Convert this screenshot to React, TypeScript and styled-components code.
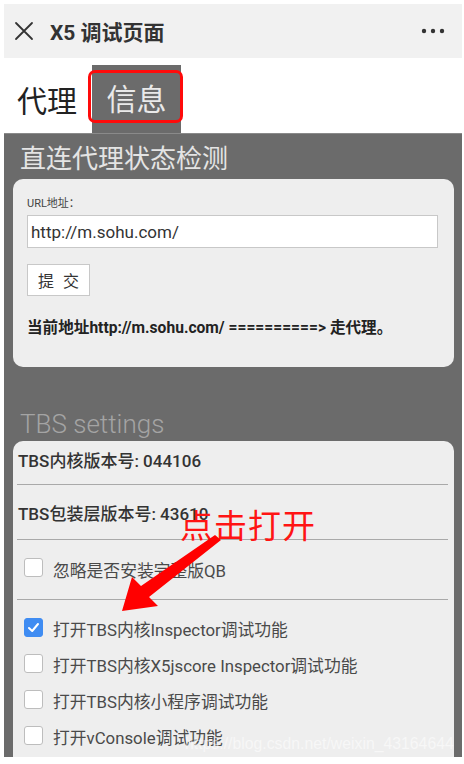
import React from 'react';
import styled, { createGlobalStyle } from 'styled-components';

const GlobalStyle = createGlobalStyle`
  html, body {
    margin: 0;
    padding: 0;
    background: #ffffff;
  }
  body {
    font-family: Roboto, "Noto Sans CJK SC", sans-serif;
    color: #333333;
  }
  * {
    box-sizing: border-box;
  }
`;

const Frame = styled.div`
  position: relative;
  width: 464px;
  height: 764px;
  padding: 4px 2px 7px 4px;
  display: flex;
  flex-direction: column;
  overflow: hidden;
  background: #ffffff;
`;

const Header = styled.header`
  height: 54px;
  flex-shrink: 0;
  display: flex;
  align-items: center;
  padding: 0 17px 0 10px;
  background: #f1f1f1;
`;

const HeaderTitle = styled.h1`
  flex: 1;
  margin: 0 0 0 16px;
  font-size: 21px;
  font-weight: 700;
  color: #333333;
`;

const IconButton = styled.span`
  display: flex;
  align-items: center;
  justify-content: center;
`;

const TabRow = styled.nav`
  height: 75px;
  flex-shrink: 0;
  display: flex;
  align-items: flex-end;
  padding-left: 13px;
`;

const Tab = styled.div<{ $active?: boolean }>`
  position: relative;
  display: flex;
  align-items: center;
  justify-content: center;
  height: 68px;
  padding: ${(p) => (p.$active ? '2px 0 0 0' : '6px 0 0 0')};
  width: ${(p) => (p.$active ? '89px' : 'auto')};
  margin-left: ${(p) => (p.$active ? '15px' : '0')};
  background: ${(p) => (p.$active ? '#6b6b6b' : 'transparent')};
  color: ${(p) => (p.$active ? '#e9e9e9' : '#222222')};
  font-size: 30px;
  line-height: 1;
`;

const Highlight = styled.span`
  position: absolute;
  left: -4px;
  top: 5px;
  width: 95px;
  height: 53px;
  border: 3px solid #ff0a0a;
  border-radius: 7px;
`;

const Panel = styled.main`
  flex: 1;
  display: flex;
  flex-direction: column;
  padding: 0 8px 0 9px;
  background: #6b6b6b;
  border-top: 1px solid #8a8a8a;
`;

const SectionTitle = styled.h2<{ $faded?: boolean }>`
  margin: 0;
  display: flex;
  align-items: ${(p) => (p.$faded ? 'flex-end' : 'center')};
  padding-left: 7px;
  height: ${(p) => (p.$faded ? '74px' : '45px')};
  padding-bottom: ${(p) => (p.$faded ? '2px' : '0')};
  font-size: 26px;
  font-weight: ${(p) => (p.$faded ? 300 : 400)};
  color: ${(p) => (p.$faded ? '#a4a4a4' : '#e4e4e4')};
`;

const Card = styled.section<{ $grow?: boolean }>`
  display: flex;
  flex-direction: column;
  background: #eeeeee;
  border-radius: 10px;
  flex: ${(p) => (p.$grow ? '1' : 'none')};
  border-bottom-left-radius: ${(p) => (p.$grow ? '0' : '10px')};
  border-bottom-right-radius: ${(p) => (p.$grow ? '0' : '10px')};
`;

const ProxyForm = styled.div`
  height: 188px;
  padding: 18px 16px 0 14px;
  display: flex;
  flex-direction: column;
  align-items: flex-start;
`;

const FieldLabel = styled.label`
  font-size: 11px;
  color: #444444;
  line-height: 14px;
`;

const UrlInput = styled.input`
  margin-top: 4px;
  width: 411px;
  height: 33px;
  padding: 0 3px;
  border: 1px solid #c8c8c8;
  background: #ffffff;
  font-family: Roboto, "Noto Sans CJK SC", sans-serif;
  font-size: 17px;
  color: #333333;
  outline: none;
`;

const SubmitButton = styled.button`
  margin-top: 16px;
  width: 63px;
  height: 32px;
  padding: 0;
  display: flex;
  align-items: center;
  justify-content: center;
  gap: 9px;
  white-space: nowrap;
  border: 1px solid #c8c8c8;
  background: #ffffff;
  font-family: "Noto Sans CJK SC", sans-serif;
  font-size: 16px;
  color: #333333;
`;

const StatusText = styled.p`
  margin: 19px 0 0 0;
  font-size: 15.6px;
  font-weight: 700;
  color: #222222;
  white-space: nowrap;
`;

const InfoRow = styled.div<{ $h: number; $pb?: number }>`
  height: ${(p) => p.$h}px;
  display: flex;
  align-items: center;
  padding: 0 0 ${(p) => p.$pb ?? 0}px 5px;
  font-size: 17px;
  font-weight: 500;
  color: #333333;
`;

const Divider = styled.hr`
  margin: 0 6px 0 4px;
  border: none;
  height: 1px;
  background: #a9a9a9;
`;

const OptionList = styled.div`
  padding-top: 11px;
  display: flex;
  flex-direction: column;
`;

const OptionRow = styled.label<{ $h?: number }>`
  height: ${(p) => p.$h ?? 36}px;
  display: flex;
  align-items: center;
  gap: 10px;
  padding-left: 11px;
  font-size: 16.8px;
  font-weight: 400;
  color: #4a4a4a;
`;

const Box = styled.span<{ $checked?: boolean }>`
  width: 19px;
  height: 19px;
  flex-shrink: 0;
  display: flex;
  align-items: center;
  justify-content: center;
  margin-top: -4px;
  border-radius: 3px;
  border: 1px solid ${(p) => (p.$checked ? '#3f8cf2' : '#bdbdbd')};
  background: ${(p) => (p.$checked ? '#3f8cf2' : '#ffffff')};
`;

const Callout = styled.span`
  position: absolute;
  left: 180px;
  top: 500px;
  font-family: "Noto Sans CJK SC", sans-serif;
  font-size: 33px;
  color: #ff1414;
  letter-spacing: 1px;
`;

const ArrowMark = styled.svg`
  position: absolute;
  left: 110px;
  top: 530px;
`;

const Watermark = styled.span`
  position: absolute;
  left: 185px;
  top: 735px;
  font-family: "Liberation Sans", sans-serif;
  font-size: 15.8px;
  color: rgba(255, 255, 255, 0.55);
`;

function Checkbox({ checked }: { checked?: boolean }) {
  return (
    <Box $checked={checked}>
      {checked && (
        <svg width="13" height="13" viewBox="0 0 13 13">
          <path d="M2 7 L5.2 10 L11 3" fill="none" stroke="#ffffff" strokeWidth="2" strokeLinecap="round" strokeLinejoin="round" />
        </svg>
      )}
    </Box>
  );
}

const options = [
  { text: '打开TBS内核Inspector调试功能', checked: true },
  { text: '打开TBS内核X5jscore Inspector调试功能' },
  { text: '打开TBS内核小程序调试功能' },
  { text: '打开vConsole调试功能' },
];

export default function App() {
  return (
    <>
      <GlobalStyle />
      <Frame>
        <Header>
          <IconButton>
            <svg width="20" height="20" viewBox="0 0 20 20">
              <path d="M2 2 L18 18 M18 2 L2 18" stroke="#333" strokeWidth="1.8" strokeLinecap="round" />
            </svg>
          </IconButton>
          <HeaderTitle>X5 调试页面</HeaderTitle>
          <IconButton>
            <svg width="24" height="6" viewBox="0 0 24 6">
              <circle cx="3" cy="3" r="2.2" fill="#333" />
              <circle cx="12" cy="3" r="2.2" fill="#333" />
              <circle cx="21" cy="3" r="2.2" fill="#333" />
            </svg>
          </IconButton>
        </Header>

        <TabRow>
          <Tab>代理</Tab>
          <Tab $active>
            信息
            <Highlight />
          </Tab>
        </TabRow>

        <Panel>
          <SectionTitle>直连代理状态检测</SectionTitle>
          <Card>
            <ProxyForm>
              <FieldLabel>URL地址：</FieldLabel>
              <UrlInput defaultValue="http://m.sohu.com/" />
              <SubmitButton>
                <span>提</span>
                <span>交</span>
              </SubmitButton>
              <StatusText>当前地址http://m.sohu.com/ ==========&gt; 走代理。</StatusText>
            </ProxyForm>
          </Card>

          <SectionTitle $faded>TBS settings</SectionTitle>
          <Card $grow>
            <InfoRow $h={43} $pb={6}>TBS内核版本号: 044106</InfoRow>
            <Divider />
            <InfoRow $h={54}>TBS包装层版本号: 43610</InfoRow>
            <Divider />
            <OptionRow $h={59}>
              <Checkbox />
              忽略是否安装完整版QB
            </OptionRow>
            <Divider />
            <OptionList>
              {options.map((o) => (
                <OptionRow key={o.text}>
                  <Checkbox checked={o.checked} />
                  {o.text}
                </OptionRow>
              ))}
            </OptionList>
          </Card>
        </Panel>

        <Callout>点击打开</Callout>
        <ArrowMark width="120" height="90" viewBox="0 0 120 90">
          <path d="M105 5 L31 56 L22 47 L12 81 L48 76 L39 67 L111 10 Z" fill="#ff0000" />
        </ArrowMark>
        <Watermark>https://blog.csdn.net/weixin_43164644</Watermark>
      </Frame>
    </>
  );
}
